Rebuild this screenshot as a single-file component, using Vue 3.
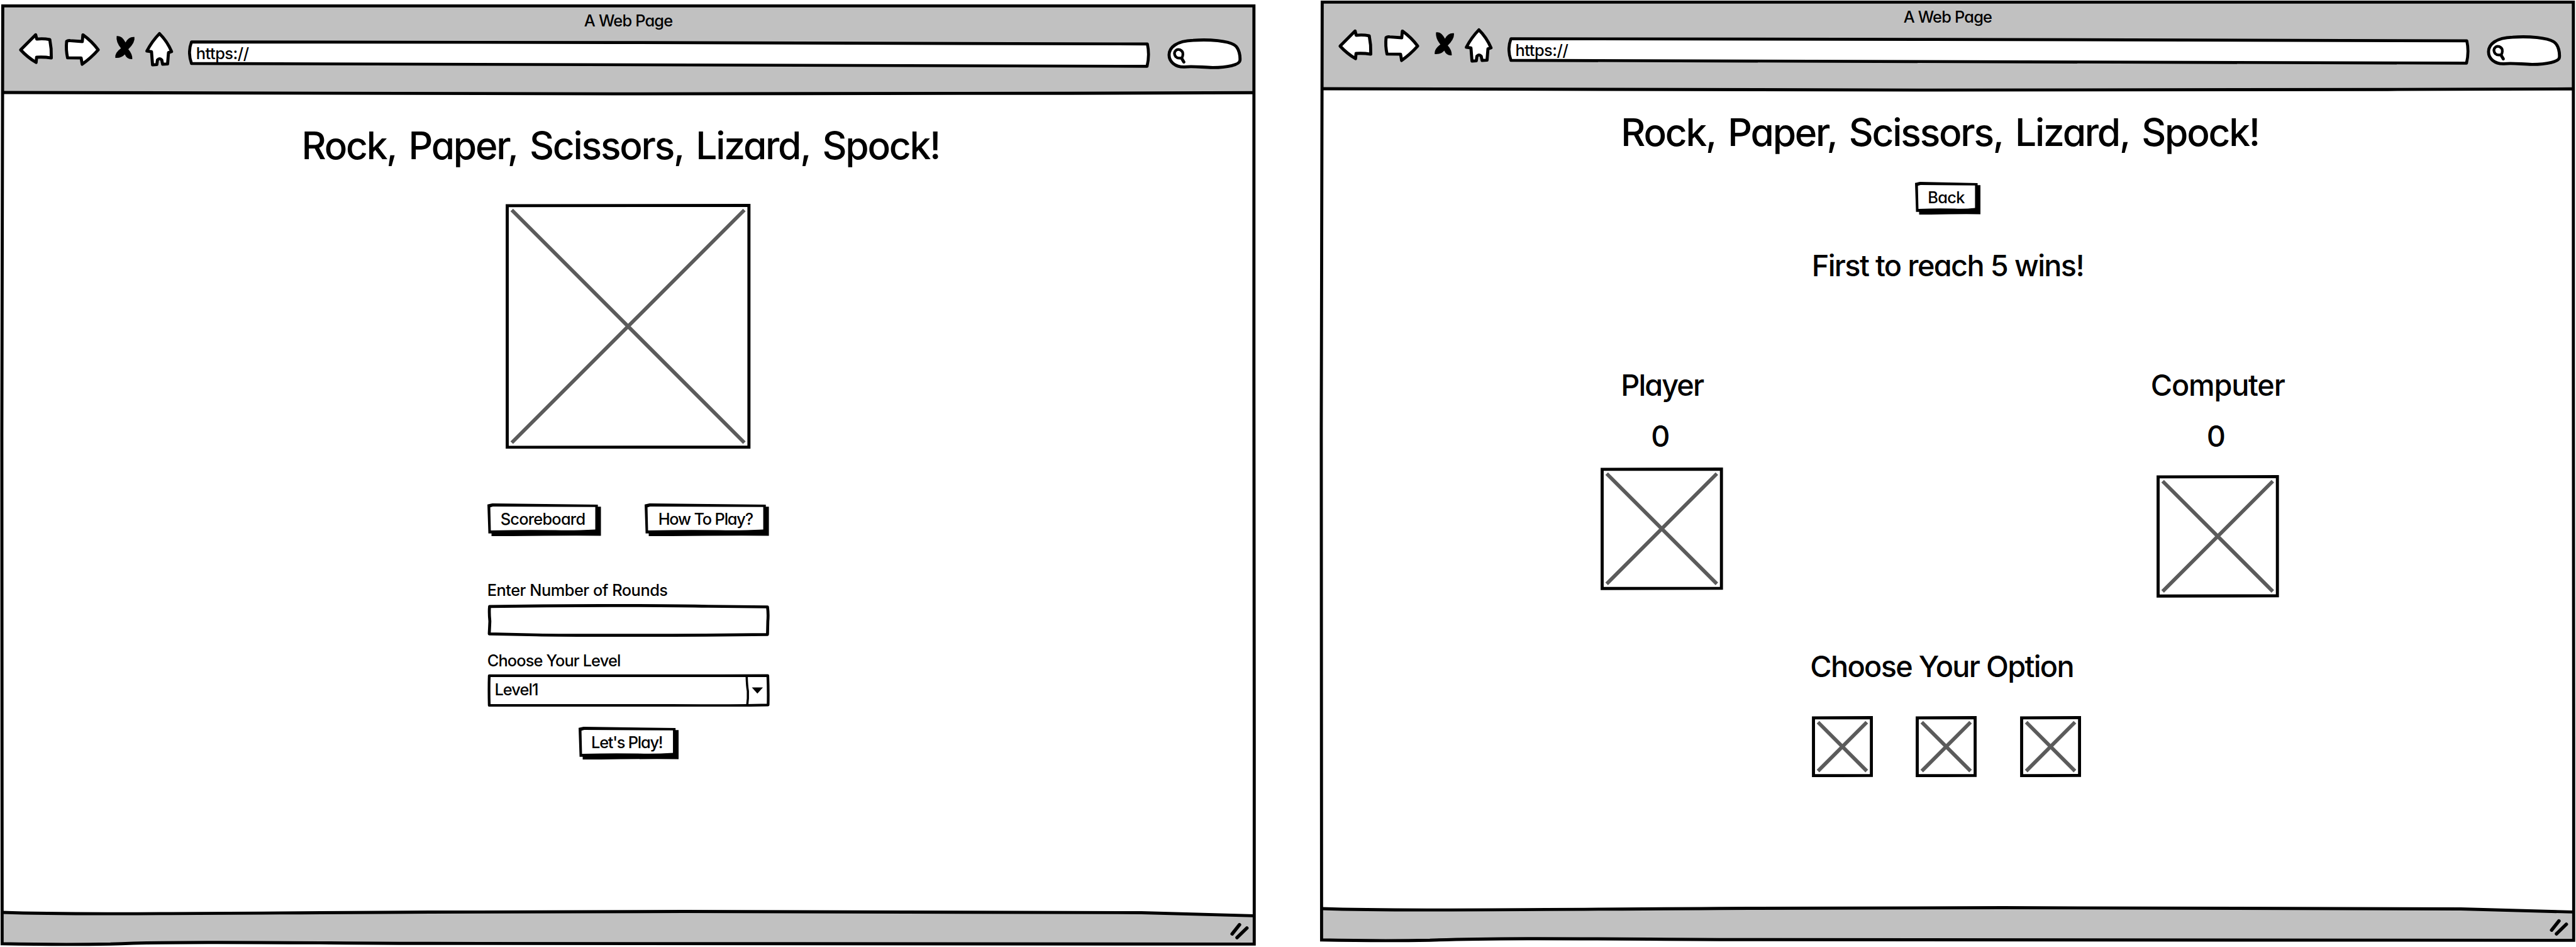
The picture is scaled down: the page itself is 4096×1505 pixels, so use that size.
<script setup>
import { h } from 'vue'

const BOARD_WIDTH = 4198
const TITLE = 'Rock, Paper, Scissors, Lizard, Spock!'

const windows = [
  { id: 'start', page: 'A Web Page', url: 'https://' },
  { id: 'game', page: 'A Web Page', url: 'https://' },
]

// Tracks a line of text so that it spans the given width in board units.
const vFit = {
  mounted(el, { value }) {
    const board = el.closest('.board')
    const range = document.createRange()
    range.selectNodeContents(el)
    const unit = BOARD_WIDTH / board.getBoundingClientRect().width
    const width = range.getBoundingClientRect().width * unit
    const count = el.textContent.trim().length
    el.style.letterSpacing = ((value - width) / count).toFixed(3) + 'px'
  },
}

// Hand-drawn placeholder: a square frame with a grey cross.
const Placeholder = ({ size }) =>
  h('svg', { width: size, height: size, viewBox: `0 0 ${size} ${size}`, fill: 'none' }, [
    h('path', {
      d: `M10 10L${size - 10} ${size - 10}M${size - 10} 10L10 ${size - 10}`,
      stroke: '#5b5b5b',
      'stroke-width': 6,
    }),
    h('path', {
      d: `M2.6 2.9L${size - 2.5} 2.5V${size - 2.8}L2.6 ${size - 2.4}Z`,
      stroke: '#000',
      'stroke-width': 5,
    }),
  ])
Placeholder.props = ['size']

// Hand-drawn button face with its hard shadow.
const ButtonShape = ({ w }) =>
  h('svg', { width: w, height: 54, viewBox: `0 0 ${w} 54` }, [
    h('path', {
      d: `M0 1.8L8 0L${w - 5} 2V5.3H${w}V52.7Q${w * 0.55} 52.2 6.7 53.8V49H1.6Z`,
      fill: '#000',
    }),
    h('path', {
      d: `M4.7 6.3L9 5L${w - 9.2} 6V42.6Q${w * 0.75} 44.6 ${w * 0.6} 43.6Q${w * 0.35} 42.6 5.6 44Z`,
      fill: '#fff',
    }),
  ])
ButtonShape.props = ['w']
</script>

<template>
  <div class="board">
    <section v-for="win in windows" :key="win.id" class="window" :class="win.id">
      <svg class="frame" width="2048" height="1536" viewBox="0 0 2048 1536" fill="none" stroke="#000" stroke-width="5">
        <path d="M4 3.5H2043V145.5Q1500 148 900 147.5T4 144.5Z" fill="#c1c1c1" stroke="none" />
        <path d="M4 1481C300 1483.5 700 1479.5 1150 1479.5S1850 1480 1860 1480.5L2043 1485.5V1531.5L4 1531.5Z" fill="#c1c1c1" stroke="none" />
        <path d="M4 144.5C200 146.5 600 146.7 1000 146.7S1700 146 2043 144.8" />
        <path d="M4 1480C120 1484 300 1481.5 700 1479.5S1700 1478.5 1860 1480.5L2043 1485.5" />
        <path d="M4.5 3.5H2043.5V600L2044 1200V1531.6C1400 1532.5 900 1531 700 1530.5S300 1526.5 180 1531.5Q100 1533 3.5 1531L3 700Z" />
        <path d="M2020 1500L2008 1515M2032 1505.5L2016 1521" stroke-width="5.6" stroke-linecap="round" />
      </svg>

      <header class="chrome">
        <div class="page-name"><span v-fit="144">{{ win.page }}</span></div>
        <div class="toolbar">
          <svg class="nav" width="262" height="62" viewBox="26 44 262 62" stroke="#000" stroke-width="5" stroke-linejoin="round" fill="#fff">
            <path d="M34 75L58.5 50.5L60.3 57.4Q71 56.3 81.5 58.2Q84.5 73 84 88.2Q72 86.2 60 87L59.2 95.5Q45 87 34 75Z" />
            <path d="M109 61Q111 59.5 115 60L134.5 61.4L135.5 50.5Q150 61 160.5 75Q148 89 134.3 98.4L132.6 88.2L110.5 88Q107.5 75 109 61Z" />
            <path d="M239.8 77Q248 61 260.3 48.5Q273 61 280 77.8L275 79.5L273.5 98L265.5 98.5L264 91.5Q260.5 87.5 257 91.5L256 99L249 99.3L247.3 78Z" />
            <path d="M190.5 52.5Q199 51 205 63Q210 53 219.500 54Q221 63 209.500 74Q216.500 82 216 90Q207.500 91 203.8 82.500Q198 89 188.3 88Q187 80 197.500 72.5Q189 62 190.5 52.5Z" stroke="none" fill="#000" />
          </svg>
          <div class="url">
            <svg width="1568" height="46" viewBox="0 0 1568 46" fill="#fff" stroke="#000" stroke-width="4.8" stroke-linejoin="round">
              <path d="M5.5 2.6C500 3 1100 4.6 1563.5 6Q1567.5 24 1563 42.4C1000 42.6 500 40.4 5.5 37.8Q-1 20 5.5 2.6Z" />
            </svg>
            <span v-fit="86">{{ win.url }}</span>
          </div>
          <svg class="search" width="122" height="52" viewBox="0 0 122 52" fill="#fff" stroke="#000" stroke-width="5" stroke-linejoin="round">
            <path d="M28 46.5C13 47 3 38 3 27C3 15 15 4 42 3.2C70 1 99 4.5 109 10.5C118 16 119 30 118.5 36C118 43 98 47.5 74 47.5C55 47 42 45 28 46.5Z" />
            <path d="M14 30Q10.5 26 12.5 21.5Q15.5 17 20.5 18.5Q26 21 25.5 26Q25 32 22 32Q17 33 14 30Z" stroke-width="4.4" />
            <path d="M23.5 32.5L27 38.5" stroke-width="5" stroke-linecap="round" />
          </svg>
        </div>
      </header>

      <main v-if="win.id === 'start'" class="page">
        <h1><span v-fit="1040">{{ TITLE }}</span></h1>
        <Placeholder class="hero" :size="399" />
        <div class="actions">
          <button class="btn"><ButtonShape :w="185" /><span v-fit="138">Scoreboard</span></button>
          <button class="btn"><ButtonShape :w="202.5" /><span v-fit="154">How To Play?</span></button>
        </div>
        <form class="form" @submit.prevent>
          <label><span v-fit="294">Enter Number of Rounds</span></label>
          <div class="field">
            <svg width="460" height="54" viewBox="0 0 460 54" fill="#fff" stroke="#000" stroke-width="4.8" stroke-linejoin="round">
              <path d="M3.5 4C120 2 290 1.8 360 3.6L456.5 4.6Q458 16 457 28L456.5 49.5C330 51 150 51.5 80 50.2L3 48.5Q3.6 38 4 28Q2.6 14 3.5 4Z" />
            </svg>
          </div>
          <label class="second"><span v-fit="217">Choose Your Level</span></label>
          <div class="field select">
            <svg width="460" height="54" viewBox="0 0 460 54" fill="#fff" stroke="#000" stroke-width="4.4" stroke-linejoin="round">
              <path d="M3 3C150 3.2 300 3.8 380 3L457 2.8Q458 25 457.5 50.5Q400 52 300 51.5L3 51.2Q2.3 25 3 3Z" />
              <path d="M422.5 3.5Q423 20 424.5 28Q425 40 423.5 50.5" stroke-width="3.6" fill="none" />
              <path d="M431 22H449L440 32Z" fill="#000" stroke="none" />
            </svg>
            <span v-fit="71">Level1</span>
          </div>
          <button class="btn submit"><ButtonShape :w="163" /><span v-fit="116">Let's Play!</span></button>
        </form>
      </main>

      <main v-else class="page">
        <h1><span v-fit="1040">{{ TITLE }}</span></h1>
        <button class="btn back"><ButtonShape :w="107" /><span v-fit="60">Back</span></button>
        <h2 class="goal"><span v-fit="443">First to reach 5 wins!</span></h2>
        <div class="players">
          <div class="player">
            <h2><span v-fit="134">Player</span></h2>
            <p class="score">0</p>
            <Placeholder :size="199.5" />
          </div>
          <div class="player computer">
            <h2><span v-fit="218">Computer</span></h2>
            <p class="score">0</p>
            <Placeholder :size="199.5" />
          </div>
        </div>
        <h2 class="choose"><span v-fit="429">Choose Your Option</span></h2>
        <div class="options">
          <Placeholder v-for="n in 3" :key="n" :size="99.5" />
        </div>
      </main>
    </section>
  </div>
</template>

<style>
html,
body {
  background: #fff;
  overflow: hidden;
}
</style>

<style scoped>
.board {
  zoom: 0.9757;
  width: 4198px;
  height: 1542px;
  display: flex;
  justify-content: space-between;
  color: #000;
  background: #fff;
  font-family: Inter, "Liberation Sans", sans-serif;
  font-weight: 500;
  font-size: 26px;
  font-feature-settings: "cv11", "calt" 0;
  white-space: nowrap;
}
svg {
  display: block;
  flex: none;
}
.window {
  position: relative;
  flex: none;
  width: 2048px;
  height: 1536px;
}
.window.start {
  margin-top: 6px;
}
.frame {
  position: absolute;
  inset: 0;
}
.chrome {
  position: relative;
  height: 149px;
}
.page-name {
  height: 57px;
  padding-top: 11px;
  box-sizing: border-box;
  line-height: 32px;
  text-align: center;
}
.toolbar {
  display: flex;
  align-items: flex-start;
  padding-left: 26px;
}
.nav {
  margin-top: -13px;
}
.url {
  display: grid;
  margin: 3px 0 0 18.5px;
}
.url > * {
  grid-area: 1 / 1;
}
.url span {
  padding-left: 13px;
  line-height: 43px;
}
.search {
  margin-left: 28px;
}
.page {
  position: relative;
  display: flex;
  flex-direction: column;
  align-items: center;
}
h1,
h2,
p {
  margin: 0;
}
h1 {
  margin-top: 46.5px;
  padding-right: 25px;
  font-size: 62px;
  font-weight: 500;
  line-height: 71px;
  height: 70px;
  word-spacing: 6px;
}
.game h1 {
  margin-top: 31.5px;
}
h2,
.score {
  height: 50px;
  font-size: 48px;
  font-weight: 500;
  line-height: 53px;
}
.hero {
  margin-top: 60.5px;
}
.btn {
  display: grid;
  justify-items: center;
  height: 54px;
  padding: 0;
  border: 0;
  background: none;
  color: inherit;
  font: inherit;
  font-feature-settings: inherit;
}
.btn > * {
  grid-area: 1 / 1;
}
.btn span {
  padding-right: 5px;
  line-height: 51px;
}
.actions {
  display: flex;
  justify-content: space-between;
  width: 459px;
  margin-top: 88.5px;
}
.form {
  display: flex;
  flex-direction: column;
  width: 460px;
  margin-top: 71px;
}
label {
  height: 32px;
  line-height: 34px;
  margin-bottom: 7px;
}
label.second {
  margin-top: 21px;
}
.field {
  display: grid;
}
.field > * {
  grid-area: 1 / 1;
}
.select span {
  padding-left: 12px;
  line-height: 51px;
}
.submit {
  align-self: center;
  margin-top: 32px;
}
.back {
  margin-top: 45.5px;
}
.goal {
  margin-top: 57px;
}
.players {
  display: flex;
  justify-content: space-between;
  width: 1145.5px;
  margin-top: 144.5px;
  padding-right: 25.5px;
}
.player {
  display: flex;
  flex-direction: column;
  align-items: center;
  width: 240px;
}
.score {
  margin: 33px 5px 27.5px 0;
}
.computer .score {
  margin-bottom: 39.5px;
}
.choose {
  margin-top: 86px;
  padding-right: 19px;
}
.options {
  display: flex;
  gap: 70.5px;
  margin-top: 57px;
  padding-right: 4px;
}
</style>
